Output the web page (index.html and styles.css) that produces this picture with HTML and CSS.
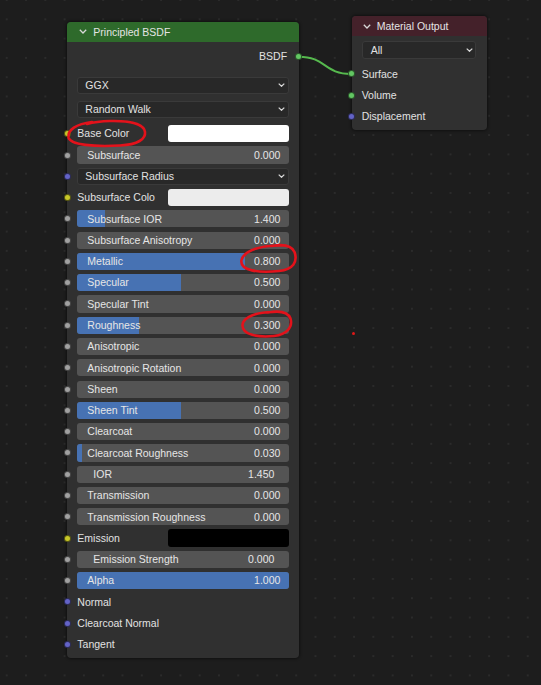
FILE: index.html
```html
<!DOCTYPE html>
<html>
<head>
<meta charset="utf-8">
<link rel="stylesheet" href="styles.css">
</head>
<body>
<div class="canvas">
  <svg class="links" width="541" height="685" viewBox="0 0 541 685">
    <path d="M298.7 56.7 C 326 56.7, 324 74, 351 74" fill="none" stroke="#56b94e" stroke-width="2"/>
  </svg>

  <div class="node bsdf">
    <div class="node-header green">
      <svg class="hchev" width="8" height="5" viewBox="0 0 8 5"><polyline points="0.8,0.8 4,4 7.2,0.8" fill="none" stroke="#d8d8d8" stroke-width="1.3"/></svg>
      <span class="htitle">Principled BSDF</span>
    </div>
    <div class="node-body">
      <div class="row out-row"><span class="label">BSDF</span><span class="socket out green-s"></span></div>
      <div class="dropdown dd-first"><span>GGX</span><svg class="chev" width="7" height="4" viewBox="0 0 7 4"><polyline points="0.7,0.6 3.5,3.3 6.3,0.6" fill="none" stroke="#d8d8d8" stroke-width="1.2"/></svg></div>
      <div class="dropdown dd-second"><span>Random Walk</span><svg class="chev" width="7" height="4" viewBox="0 0 7 4"><polyline points="0.7,0.6 3.5,3.3 6.3,0.6" fill="none" stroke="#d8d8d8" stroke-width="1.2"/></svg></div>

      <div class="rows">
        <div class="row"><span class="socket yellow"></span><span class="label grow">Base Color</span><span class="swatch white"></span></div>
        <div class="row"><span class="socket gray"></span><div class="field"><span class="label">Subsurface</span><span class="value">0.000</span></div></div>
        <div class="row"><span class="socket purple"></span><div class="dropdown dd-row"><span>Subsurface Radius</span><svg class="chev" width="7" height="4" viewBox="0 0 7 4"><polyline points="0.7,0.6 3.5,3.3 6.3,0.6" fill="none" stroke="#d8d8d8" stroke-width="1.2"/></svg></div></div>
        <div class="row"><span class="socket yellow"></span><span class="label grow">Subsurface Colo</span><span class="swatch offwhite"></span></div>
        <div class="row"><span class="socket gray"></span><div class="field"><span class="fill" style="width:28px"></span><span class="label">Subsurface IOR</span><span class="value">1.400</span></div></div>
        <div class="row"><span class="socket gray"></span><div class="field"><span class="label">Subsurface Anisotropy</span><span class="value">0.000</span></div></div>
        <div class="row"><span class="socket gray"></span><div class="field"><span class="fill" style="width:168px"></span><span class="label">Metallic</span><span class="value">0.800</span></div></div>
        <div class="row"><span class="socket gray"></span><div class="field"><span class="fill" style="width:104px"></span><span class="label">Specular</span><span class="value">0.500</span></div></div>
        <div class="row"><span class="socket gray"></span><div class="field"><span class="label">Specular Tint</span><span class="value">0.000</span></div></div>
        <div class="row"><span class="socket gray"></span><div class="field"><span class="fill" style="width:62px"></span><span class="label">Roughness</span><span class="value">0.300</span></div></div>
        <div class="row"><span class="socket gray"></span><div class="field"><span class="label">Anisotropic</span><span class="value">0.000</span></div></div>
        <div class="row"><span class="socket gray"></span><div class="field"><span class="label">Anisotropic Rotation</span><span class="value">0.000</span></div></div>
        <div class="row"><span class="socket gray"></span><div class="field"><span class="label">Sheen</span><span class="value">0.000</span></div></div>
        <div class="row"><span class="socket gray"></span><div class="field"><span class="fill" style="width:104px"></span><span class="label">Sheen Tint</span><span class="value">0.500</span></div></div>
        <div class="row"><span class="socket gray"></span><div class="field"><span class="label">Clearcoat</span><span class="value">0.000</span></div></div>
        <div class="row"><span class="socket gray"></span><div class="field"><span class="fill" style="width:5px"></span><span class="label">Clearcoat Roughness</span><span class="value">0.030</span></div></div>
        <div class="row"><span class="socket gray"></span><div class="field inset"><span class="label">IOR</span><span class="value">1.450</span></div></div>
        <div class="row"><span class="socket gray"></span><div class="field"><span class="label">Transmission</span><span class="value">0.000</span></div></div>
        <div class="row"><span class="socket gray"></span><div class="field"><span class="label">Transmission Roughness</span><span class="value">0.000</span></div></div>
        <div class="row"><span class="socket yellow"></span><span class="label grow">Emission</span><span class="swatch black"></span></div>
        <div class="row"><span class="socket gray"></span><div class="field inset"><span class="label">Emission Strength</span><span class="value">0.000</span></div></div>
        <div class="row"><span class="socket gray"></span><div class="field"><span class="fill full"></span><span class="label">Alpha</span><span class="value">1.000</span></div></div>
        <div class="row"><span class="socket purple"></span><span class="label">Normal</span></div>
        <div class="row"><span class="socket purple"></span><span class="label">Clearcoat Normal</span></div>
        <div class="row"><span class="socket purple"></span><span class="label">Tangent</span></div>
      </div>
    </div>
  </div>

  <div class="node output">
    <div class="node-header maroon">
      <svg class="hchev" width="8" height="5" viewBox="0 0 8 5"><polyline points="0.8,0.8 4,4 7.2,0.8" fill="none" stroke="#d8d8d8" stroke-width="1.3"/></svg>
      <span class="htitle">Material Output</span>
    </div>
    <div class="node-body out-body">
      <div class="dropdown dd-all"><span>All</span><svg class="chev" width="7" height="4" viewBox="0 0 7 4"><polyline points="0.7,0.6 3.5,3.3 6.3,0.6" fill="none" stroke="#d8d8d8" stroke-width="1.2"/></svg></div>
      <div class="rows out-rows">
        <div class="row"><span class="socket green-s"></span><span class="label">Surface</span></div>
        <div class="row"><span class="socket green-s"></span><span class="label">Volume</span></div>
        <div class="row"><span class="socket purple"></span><span class="label">Displacement</span></div>
      </div>
    </div>
  </div>

  <svg class="marks" width="541" height="685" viewBox="0 0 541 685">
    <g fill="none" stroke="#e3121b" stroke-width="2.6" stroke-linecap="round">
      <path d="M92 122 C 76 124, 67.5 130, 68.5 137.5 C 70 145, 95 147, 120 145.5 C 138 144.5, 146 139, 145 132 C 144 124, 130 120.5, 110 121 C 101 121.2, 94 122, 87 124"/>
      <path d="M282 245.5 C 263 245, 244 250, 241.5 260 C 239.5 271, 259 273, 279 271 C 293 269.5, 298 262, 294.5 252 C 291.5 245.5, 283 244, 272 246"/>
      <path d="M273 312 C 257 312, 243 317, 242.5 325 C 242 335, 258 337.5, 274 336 C 287 334.5, 293 327, 290.5 318.5 C 288 312, 279 310.5, 268 312.5"/>
    </g>
  </svg>
  <span class="reddot"></span>
</div>
</body>
</html>
```
FILE: styles.css
```css
html, body {
  margin: 0;
  padding: 0;
  background: #1d1d1d;
}

.canvas {
  position: relative;
  width: 541px;
  height: 685px;
  overflow: hidden;
  background-color: #1d1d1d;
  background-image: radial-gradient(circle, #2b2b2b 0 1.3px, transparent 1.5px);
  background-size: 19.3px 19.3px;
  background-position: -2.95px -9.65px;
  font-family: "Liberation Sans", Arial, sans-serif;
  font-size: 10.5px;
  line-height: 1;
  color: #e2e2e2;
}

.links, .marks {
  position: absolute;
  left: 0;
  top: 0;
  pointer-events: none;
}

.marks { z-index: 5; }

.node {
  position: absolute;
  background: #303030;
  border-radius: 4px;
  box-shadow: 0 0 3px 1px rgba(0, 0, 0, 0.45);
  z-index: 2;
}

.bsdf {
  left: 67.3px;
  top: 22px;
  width: 231.4px;
  height: 636.3px;
}

.output {
  left: 351.7px;
  top: 16px;
  width: 135px;
  height: 114px;
}

.node-header {
  display: flex;
  align-items: center;
  border-radius: 4px 4px 0 0;
  color: #e4e4e4;
}

.bsdf .node-header { height: 19.5px; }
.output .node-header { height: 20px; }

.green { background: #2e6a2b; }
.maroon { background: #44212a; }

.hchev {
  margin-left: 12px;
  margin-right: 6px;
}

.output .hchev { margin-left: 11px; margin-right: 6px; }

.node-body {
  display: flex;
  flex-direction: column;
  padding: 4.55px 10px 0 10px;
}

.out-body { padding-top: 4.7px; padding-right: 10.4px; }

.row {
  position: relative;
  height: 21.29px;
  display: flex;
  align-items: center;
  flex-shrink: 0;
}

.out-row {
  justify-content: flex-end;
  padding-right: 1.6px;
}

.socket {
  position: absolute;
  left: -13.5px;
  top: 50%;
  width: 7px;
  height: 7px;
  margin-top: -3.5px;
  border-radius: 50%;
  box-sizing: border-box;
  border: 0.6px solid rgba(0, 0, 0, 0.55);
}

.socket.out {
  left: auto;
  right: -13.5px;
}

.gray { background: #a1a1a1; }
.yellow { background: #c7c729; }
.purple { background: #6363c7; }
.green-s { background: #63c763; }

.label {
  white-space: nowrap;
  position: relative;
}

.grow { flex: 1; }

.swatch {
  width: 121px;
  height: 17.4px;
  border-radius: 3px;
  flex-shrink: 0;
}

.white { background: #ffffff; }
.offwhite { background: #ececec; }
.black { background: #000000; }

.dropdown {
  box-sizing: border-box;
  height: 17.6px;
  background: #282828;
  border: 1px solid #3a3a3a;
  border-radius: 3px;
  display: flex;
  align-items: center;
  justify-content: space-between;
  padding: 0 2.5px 0 7px;
  color: #e2e2e2;
  flex-shrink: 0;
}

.dd-first { margin-top: 9.35px; }
.dd-second { margin-top: 6.4px; }
.dd-row { flex: 1; }

.dd-all {
  height: 18.6px;
  padding-left: 8px;
}

.chev { flex-shrink: 0; }

.rows {
  display: flex;
  flex-direction: column;
  margin-top: 4.85px;
}

.out-rows { margin-top: 4.05px; }

.field {
  position: relative;
  flex: 1;
  height: 17.2px;
  border-radius: 3px;
  background: #545454;
  overflow: hidden;
  display: flex;
  align-items: center;
  justify-content: space-between;
  padding: 0 8.3px 0 10px;
  color: #e6e6e6;
}

.field.inset {
  padding: 0 14.3px 0 16px;
}

.fill {
  position: absolute;
  left: 0;
  top: 0;
  bottom: 0;
  background: #4772b3;
}

.fill.full { right: 0; }

.value { position: relative; }

.reddot {
  position: absolute;
  left: 351.5px;
  top: 331.5px;
  width: 3px;
  height: 3px;
  border-radius: 50%;
  background: #e01818;
  z-index: 3;
}
```
